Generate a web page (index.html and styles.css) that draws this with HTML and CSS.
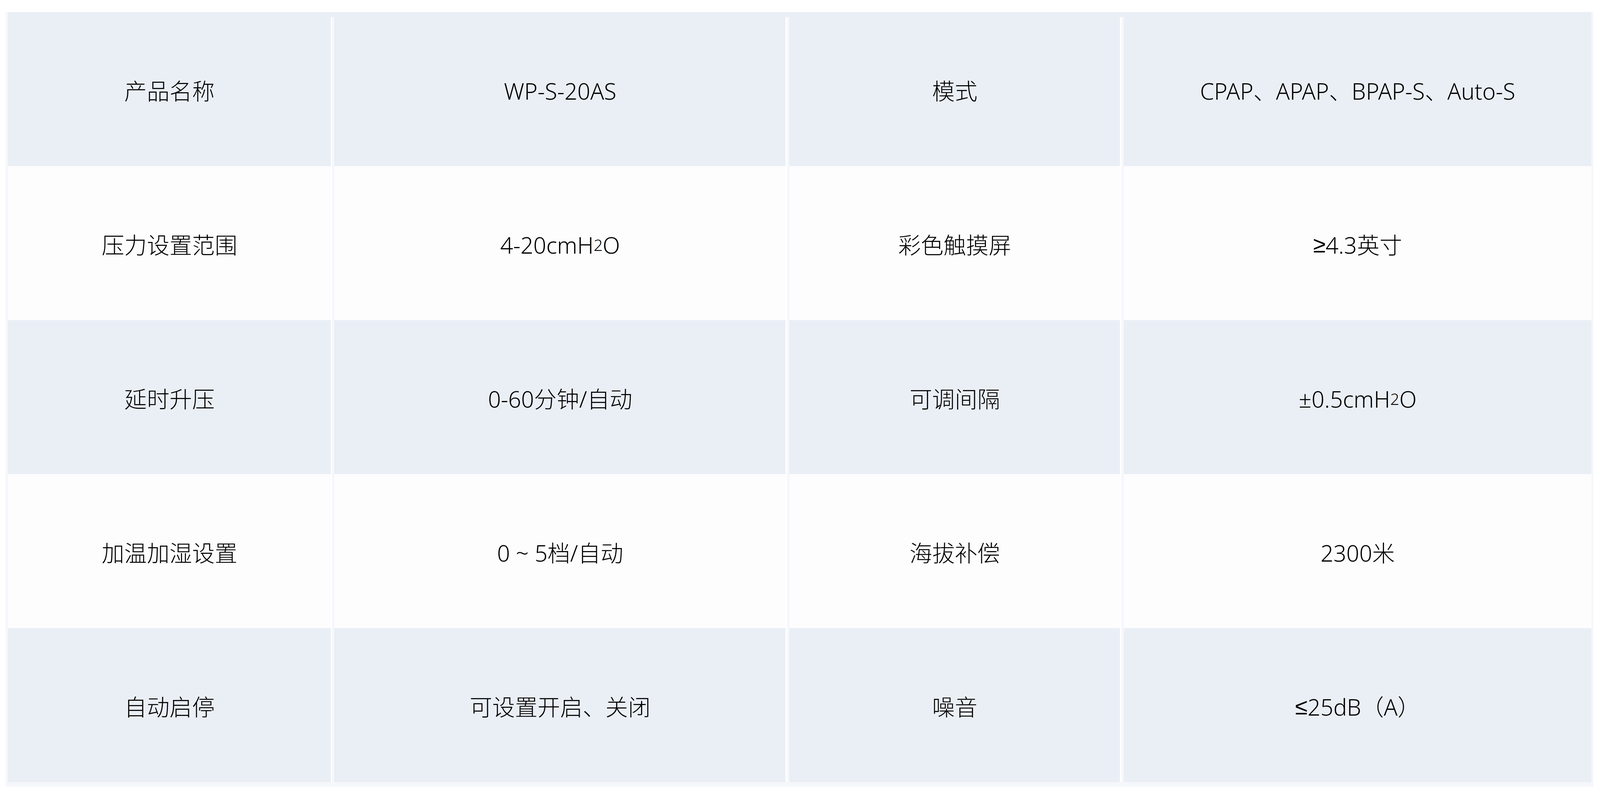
FILE: index.html
```html
<!DOCTYPE html>
<html lang="zh-CN">
<head>
<meta charset="utf-8">
<title>参数表</title>
<link rel="stylesheet" href="styles.css">
</head>
<body>
<div class="spec">
  <div class="grid">
    <div class="cell c1 r-blue top">产品名称</div>
    <div class="cell c2 r-blue top">WP-S-20AS</div>
    <div class="cell c3 r-blue top">模式</div>
    <div class="cell c4 r-blue top">CPAP、APAP、BPAP-S、Auto-S</div>

    <div class="cell c1 r-white">压力设置范围</div>
    <div class="cell c2 r-white">4-20cmH<span class="sub">2</span>O</div>
    <div class="cell c3 r-white">彩色触摸屏</div>
    <div class="cell c4 r-white"><span class="sym">≥</span>4.3英寸</div>

    <div class="cell c1 r-blue">延时升压</div>
    <div class="cell c2 r-blue">0-60分钟/自动</div>
    <div class="cell c3 r-blue">可调间隔</div>
    <div class="cell c4 r-blue">±0.5cmH<span class="sub">2</span>O</div>

    <div class="cell c1 r-white">加温加湿设置</div>
    <div class="cell c2 r-white">0 ~ 5档/自动</div>
    <div class="cell c3 r-white">海拔补偿</div>
    <div class="cell c4 r-white">2300米</div>

    <div class="cell c1 r-blue">自动启停</div>
    <div class="cell c2 r-blue">可设置开启、关闭</div>
    <div class="cell c3 r-blue">噪音</div>
    <div class="cell c4 r-blue"><span class="sym">≤</span>25dB（A）</div>
  </div>
  <div class="foot"></div>
</div>
</body>
</html>
```
FILE: styles.css
```css
html, body {
  margin: 0;
  padding: 0;
  background: #ffffff;
}

body {
  width: 100vw;
  height: 100vh;
  overflow: hidden;
  font-family: "Noto Sans", "Noto Sans CJK SC", sans-serif;
  color: #000000;
}

.spec {
  --strip: 0.1556vw;
  --rstrip: 0.1273vw;
  --toph: 0.6407vh;
  --blue: #eaeff6;
  --white: #fdfdfe;
  --light: #f5f7fb;
  margin: 1.528vh 0 0 0.3536vw;
  width: 99.2363vw;
}

.grid {
  display: grid;
  grid-template-columns: 1437fr 2004fr 1472fr 2086fr;
  grid-auto-rows: 19.418vh;
  column-gap: 0.0849vw;
  background: linear-gradient(to bottom, var(--blue) 0, var(--blue) var(--toph), #ffffff var(--toph));
}

.cell {
  display: flex;
  align-items: center;
  justify-content: center;
  padding-left: var(--strip);
  padding-top: 0.5vh;
  box-sizing: border-box;
  font-size: 1.4142vw;
  font-weight: 300;
  line-height: 1;
  white-space: nowrap;
}

.r-blue {
  background: linear-gradient(to right, var(--light) 0, var(--light) var(--strip), var(--blue) var(--strip));
}

.r-white {
  background: linear-gradient(to right, var(--light) 0, var(--light) var(--strip), var(--white) var(--strip));
}

.c4.r-blue {
  padding-right: var(--rstrip);
  background: linear-gradient(to right, var(--light) 0, var(--light) var(--strip), var(--blue) var(--strip), var(--blue) calc(100% - var(--rstrip)), var(--light) calc(100% - var(--rstrip)));
}

.c4.r-white {
  padding-right: var(--rstrip);
  background: linear-gradient(to right, var(--light) 0, var(--light) var(--strip), var(--white) var(--strip), var(--white) calc(100% - var(--rstrip)), var(--light) calc(100% - var(--rstrip)));
}

.top.c2,
.top.c3 {
  background:
    linear-gradient(var(--blue), var(--blue)) top left / 100% var(--toph) no-repeat,
    linear-gradient(to right, var(--light) 0, var(--light) var(--strip), var(--blue) var(--strip));
}

.top.c4 {
  background:
    linear-gradient(var(--blue), var(--blue)) top left / calc(100% - var(--rstrip)) var(--toph) no-repeat,
    linear-gradient(to right, var(--light) 0, var(--light) var(--strip), var(--blue) var(--strip), var(--blue) calc(100% - var(--rstrip)), var(--light) calc(100% - var(--rstrip)));
}

.sub {
  font-size: 0.7em;
}

.sym {
  font-family: "Liberation Sans", "DejaVu Sans", sans-serif;
  font-weight: 400;
}

.foot {
  height: 0.5914vh;
  background: var(--light);
}
```
